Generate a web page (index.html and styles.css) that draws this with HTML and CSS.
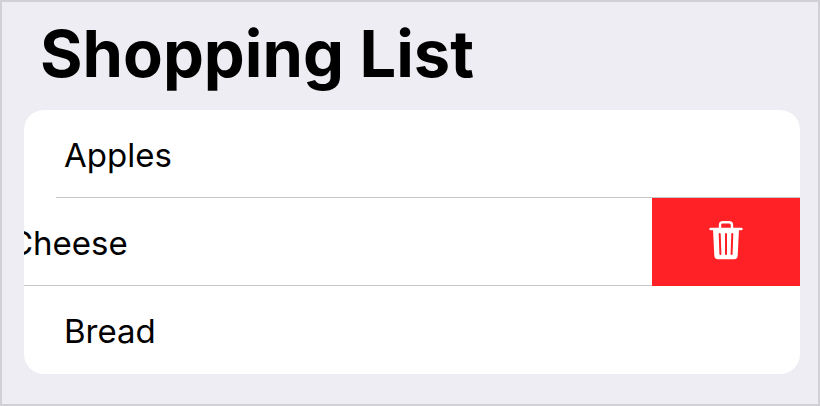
FILE: index.html
```html
<!DOCTYPE html>
<html lang="en">
<head>
<meta charset="utf-8">
<meta name="viewport" content="width=device-width, initial-scale=1">
<title>Shopping List</title>
<link rel="stylesheet" href="styles.css">
</head>
<body>
<main class="screen">
  <h1 class="title">Shopping List</h1>
  <ul class="list">
    <li class="row"><span class="label">Apples</span></li>
    <li class="row row-swiped">
      <span class="label">Cheese</span>
      <button class="delete" type="button" aria-label="Delete">
        <svg class="icon" viewBox="0 0 36 42" aria-hidden="true">
          <path d="M12 10V6.200Q12 3.200 15 3.200H21Q24 3.200 24 6.200V10" fill="none" stroke="#fff" stroke-width="2.4"/>
          <path d="M2.500 10H33.500" fill="none" stroke="#fff" stroke-width="2.4" stroke-linecap="round"/>
          <path d="M5 10H31L29.700 36.500Q29.500 40.300 26 40.300H10Q6.500 40.300 6.300 36.500Z" fill="#fff"/>
          <path d="M11.700 15L12.400 35M18 15V35M24.300 15L23.600 35" fill="none" stroke="#ff2125" stroke-width="2" stroke-linecap="round"/>
        </svg>
      </button>
    </li>
    <li class="row"><span class="label">Bread</span></li>
  </ul>
</main>
</body>
</html>
```

FILE: styles.css
```css
* {
  box-sizing: border-box;
}

body {
  margin: 0;
  background: #eeedf3;
  color: #000;
  font-family: Inter, "Liberation Sans", sans-serif;
}

.screen {
  min-height: 100vh;
  padding: 12px 18px 30px 22px;
  border: 2px solid #d1d0d6;
}

.title {
  margin: 0;
  padding: 0 16px;
  font-size: 65px;
  line-height: 80px;
  font-weight: 700;
}

.list {
  margin: 16px 0 0;
  padding: 0;
  list-style: none;
  background: #fff;
  border-radius: 20px;
  overflow: hidden;
}

.row {
  display: flex;
  align-items: center;
  height: 88px;
  padding-left: 40px;
  font-size: 33px;
  line-height: 44px;
  background: linear-gradient(#c6c6c8, #c6c6c8) 32px 100% / 100% 1px no-repeat;
}

.row:last-child {
  background: none;
}

.row-swiped {
  padding-left: 0;
  background-position: 0 100%;
}

.row-swiped .label {
  margin-left: -15px;
}

.label {
  flex: 1;
  padding-top: 2px;
}

.delete {
  display: flex;
  align-items: center;
  justify-content: center;
  width: 148px;
  height: 100%;
  padding: 0 0 4px;
  border: 0;
  background: #ff2125;
}

.icon {
  width: 36px;
  height: 42px;
}
```
